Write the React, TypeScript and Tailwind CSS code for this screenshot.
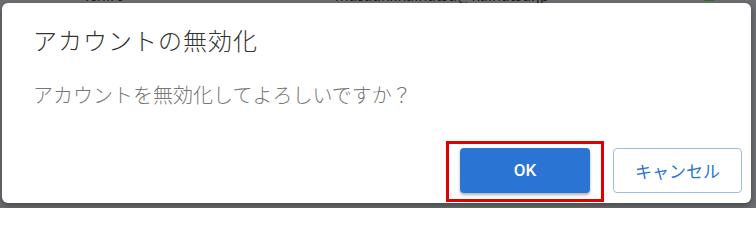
import React from "react";

export default function App() {
  const jp = { fontFamily: '"Noto Sans CJK JP", "Noto Sans", sans-serif' };
  return (
    <div className="relative w-[756px] h-[208px] overflow-hidden bg-[#6c6e71]" style={jp}>
      {/* background table row behind the overlay */}
      <div className="flex items-end h-[10px] -mt-[8px] text-[15px] text-[#1e1e1e] leading-none">
        <span className="ml-[85px]">ichiro</span>
        <span className="ml-[210px]">masaaki.kaihatsu@kaihatsu.jp</span>
        <span className="ml-auto mr-[40px] text-[#1a6e1a] text-[14px]">☑</span>
      </div>
      {/* dialog */}
      <div className="absolute left-[2px] top-[3px] w-[749px] h-[200px] bg-white rounded-[6px] shadow-[0_3px_6px_rgba(0,0,0,0.35)] flex flex-col">
        <div className="pl-[31px] pt-[22px] text-[24px] leading-[30px] text-[#333] tracking-[1px] font-light">
          アカウントの無効化
        </div>
        <div className="pl-[31px] pt-[26px] text-[20px] leading-[28px] text-[#777] font-light">
          アカウントを無効化してよろしいですか？
        </div>
        <div className="mt-auto flex justify-end gap-[23px] pr-[9px] pb-[10px]">
          <div className="relative">
            <div className="absolute -left-[14px] -right-[14px] -top-[7px] -bottom-[9px] border-[3px] border-[#e00000]" />
            <button className="relative w-[130px] h-[45px] rounded-[4px] bg-[#2a74d3] text-white text-[17px] font-medium shadow-[0_2px_3px_rgba(0,0,0,0.3)]" style={{ fontFamily: 'Roboto, "Noto Sans", sans-serif' }}>
              OK
            </button>
          </div>
          <button className="w-[129px] h-[45px] rounded-[4px] bg-white border border-[#9dbdea] text-[#2a74d3] text-[17px]">
            キャンセル
          </button>
        </div>
      </div>
    </div>
  );
}
